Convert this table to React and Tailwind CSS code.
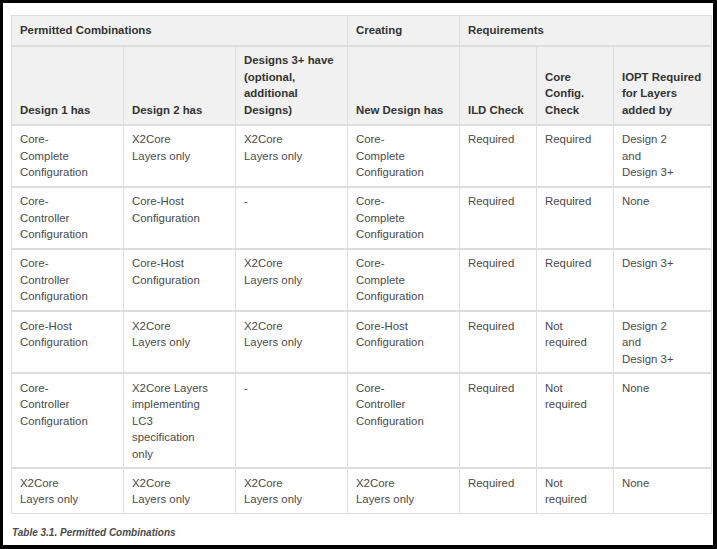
const rows = [
  [['Core-', 'Complete', 'Configuration'], ['X2Core', 'Layers only'], ['X2Core', 'Layers only'], ['Core-', 'Complete', 'Configuration'], ['Required'], ['Required'], ['Design 2', 'and', 'Design 3+']],
  [['Core-', 'Controller', 'Configuration'], ['Core-Host', 'Configuration'], ['-'], ['Core-', 'Complete', 'Configuration'], ['Required'], ['Required'], ['None']],
  [['Core-', 'Controller', 'Configuration'], ['Core-Host', 'Configuration'], ['X2Core', 'Layers only'], ['Core-', 'Complete', 'Configuration'], ['Required'], ['Required'], ['Design 3+']],
  [['Core-Host', 'Configuration'], ['X2Core', 'Layers only'], ['X2Core', 'Layers only'], ['Core-Host', 'Configuration'], ['Required'], ['Not', 'required'], ['Design 2', 'and', 'Design 3+']],
  [['Core-', 'Controller', 'Configuration'], ['X2Core Layers', 'implementing', 'LC3', 'specification', 'only'], ['-'], ['Core-', 'Controller', 'Configuration'], ['Required'], ['Not', 'required'], ['None']],
  [['X2Core', 'Layers only'], ['X2Core', 'Layers only'], ['X2Core', 'Layers only'], ['X2Core', 'Layers only'], ['Required'], ['Not', 'required'], ['None']],
];

const subHeads = [
  ['Design 1 has'],
  ['Design 2 has'],
  ['Designs 3+ have', '(optional,', 'additional', 'Designs)'],
  ['New Design has'],
  ['ILD Check'],
  ['Core', 'Config.', 'Check'],
  ['IOPT Required', 'for Layers', 'added by'],
];

const widths = [112, 112, 112, 112, 77, 77, 98];

const Lines = ({ lines }) =>
  lines.map((l, i) => (
    <span key={i} className="block whitespace-nowrap">
      {l}
    </span>
  ));

export default function App() {
  return (
    <div className="w-[717px] h-[549px] bg-white border-black border-t-[3px] border-l-[3px] border-r-[4px] border-b-[4px] pt-[12px] pl-[8px] font-['Liberation_Sans',Arial,sans-serif]">
      <table className="w-[701px] table-fixed border-collapse text-[11.4px] leading-[16.5px]">
        <colgroup>
          {widths.map((w, i) => (
            <col key={i} style={{ width: w }} />
          ))}
        </colgroup>
        <thead className="bg-[#f1f1f1] text-[#333] font-bold">
          <tr>
            <th colSpan={3} className="border border-[#dddddd] px-[8px] py-[6px] text-left align-bottom">
              Permitted Combinations
            </th>
            <th className="border border-[#dddddd] px-[8px] py-[6px] text-left align-bottom">Creating</th>
            <th colSpan={3} className="border border-[#dddddd] px-[8px] py-[6px] text-left align-bottom">
              Requirements
            </th>
          </tr>
          <tr>
            {subHeads.map((h, i) => (
              <th key={i} className="border border-[#dddddd] border-t-2 px-[8px] py-[5.75px] text-left align-bottom">
                <Lines lines={h} />
              </th>
            ))}
          </tr>
        </thead>
        <tbody className="text-[#4a4a4a]">
          {rows.map((r, ri) => (
            <tr key={ri}>
              {r.map((c, ci) => (
                <td key={ci} className="border border-[#dddddd] border-t-2 px-[8px] py-[5.3px] align-top">
                  <Lines lines={c} />
                </td>
              ))}
            </tr>
          ))}
        </tbody>
      </table>
      <p className="mt-[11px] pl-[1px] text-[10px] font-bold italic text-[#4a4a4a]">
        Table 3.1. Permitted Combinations
      </p>
    </div>
  );
}
